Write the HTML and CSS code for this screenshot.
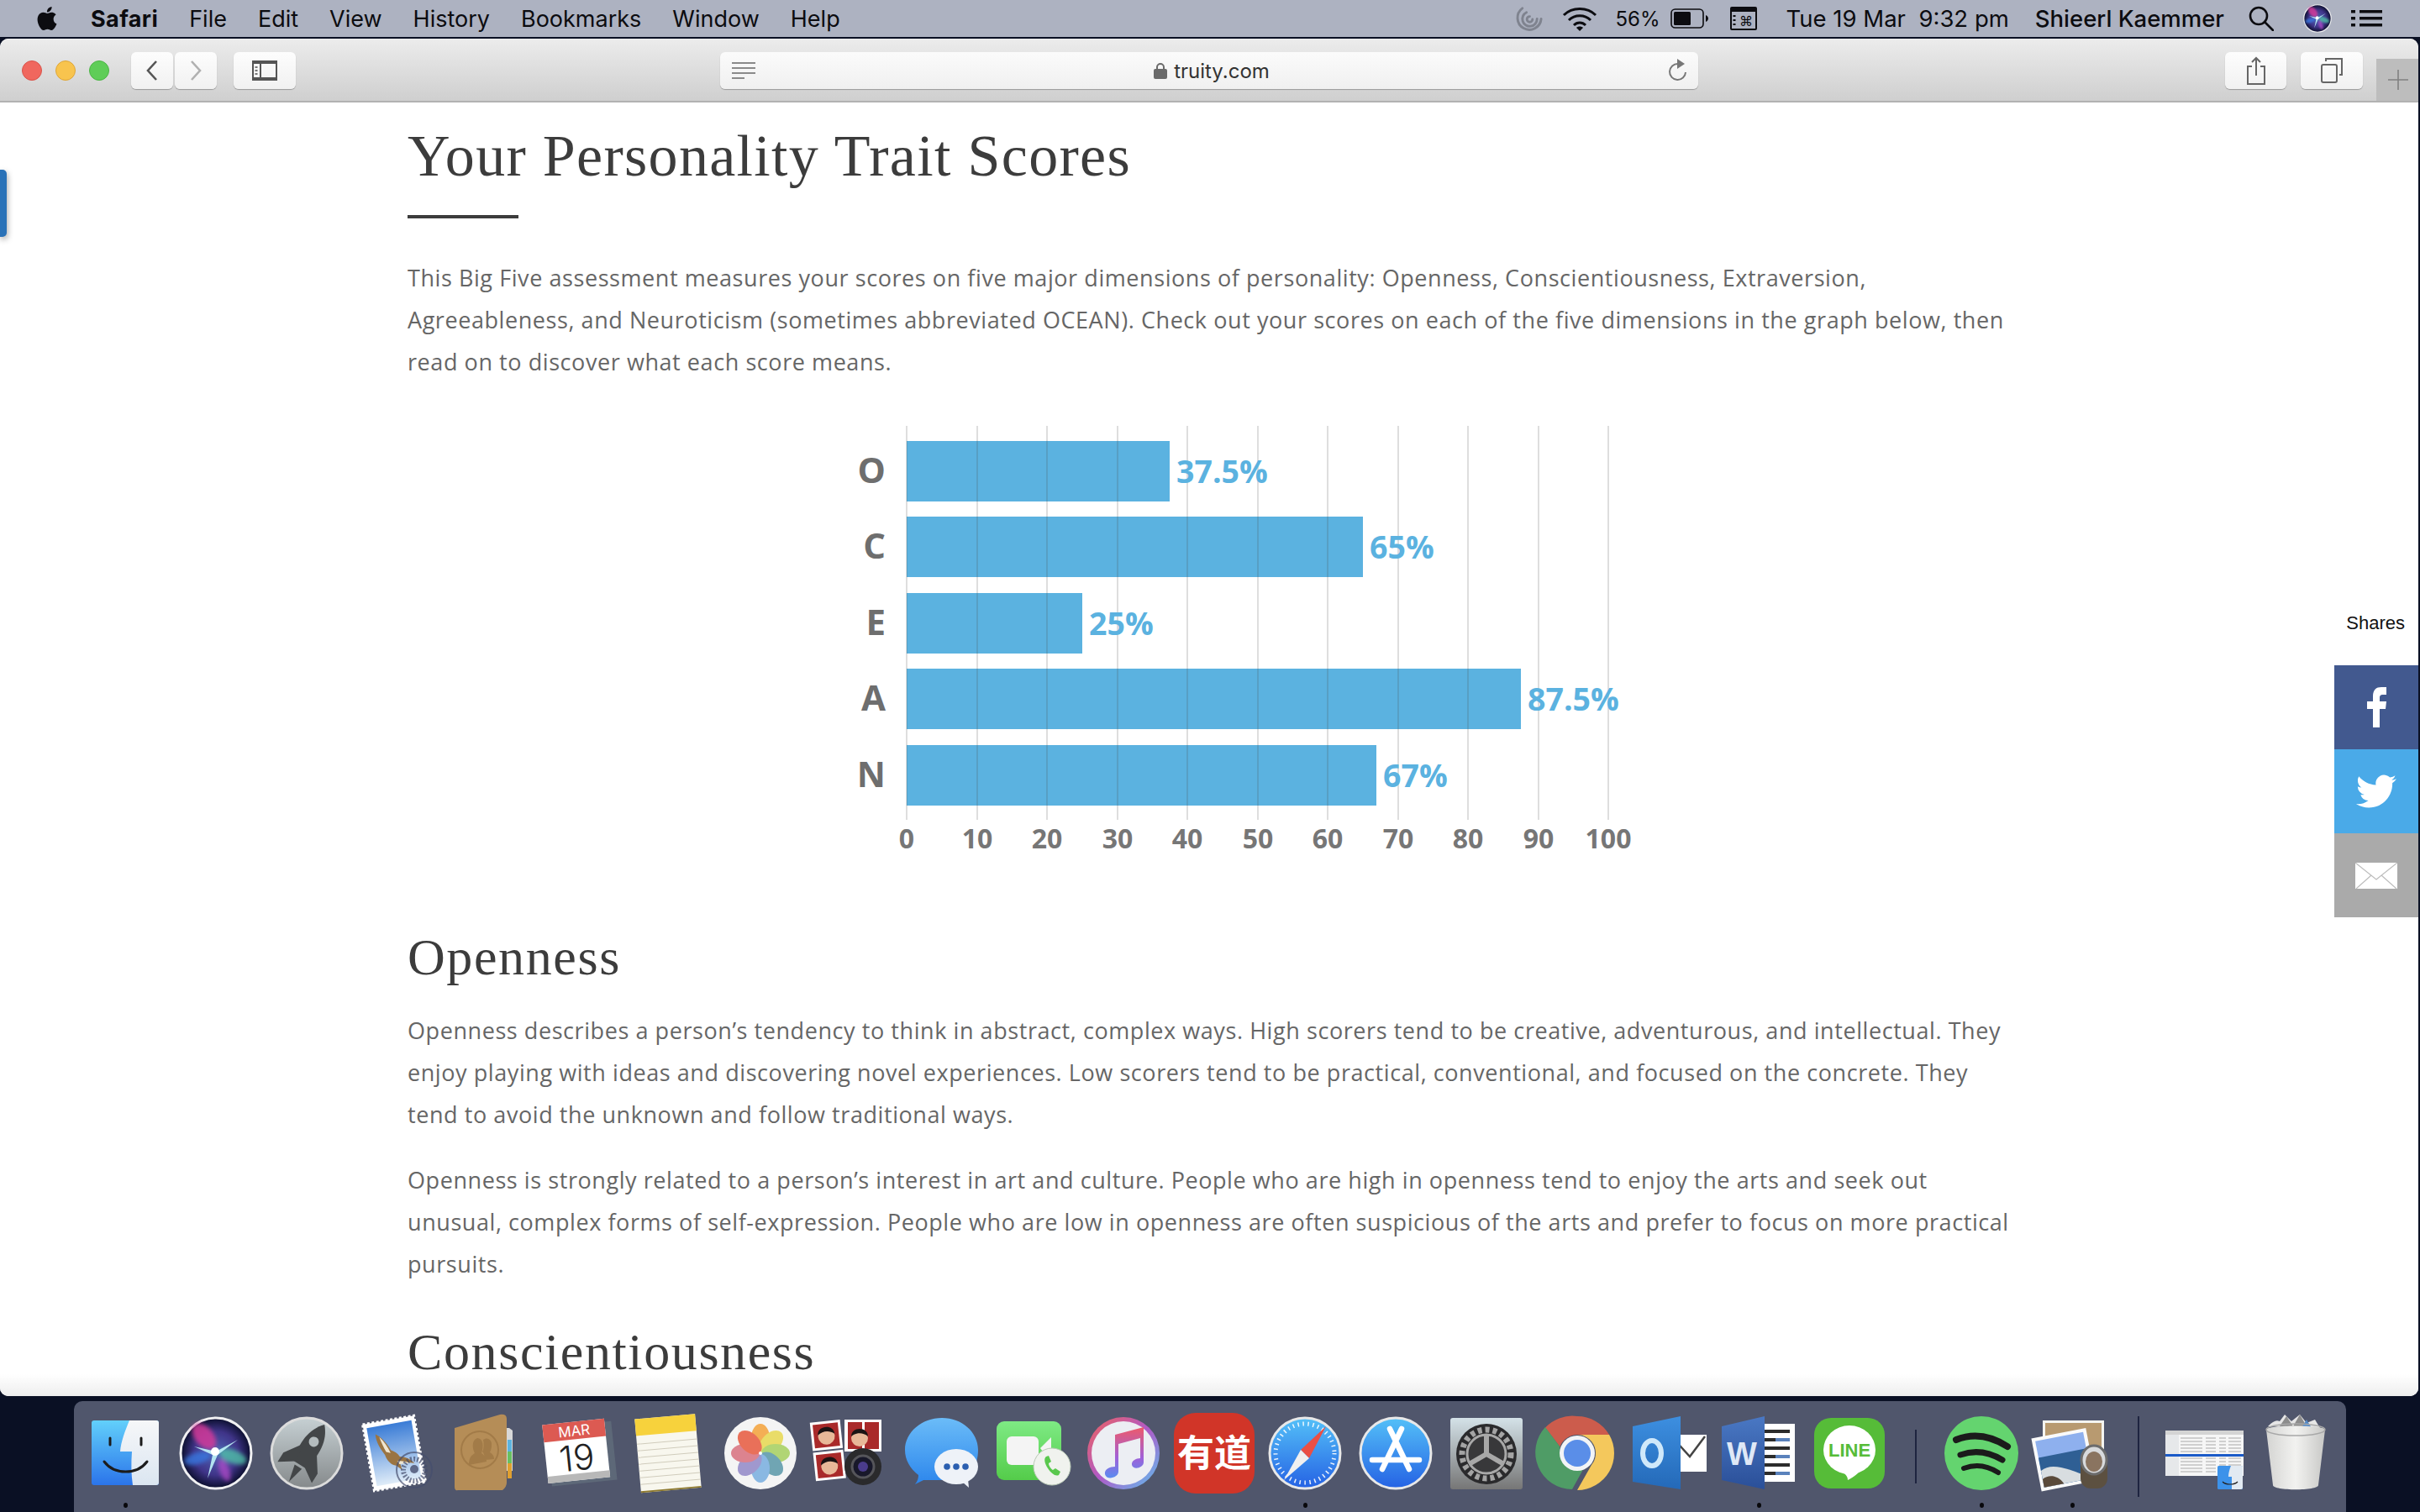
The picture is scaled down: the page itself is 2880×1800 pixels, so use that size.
FILE: index.html
```html
<!DOCTYPE html>
<html lang="en">
<head>
<meta charset="utf-8">
<title>Your Personality Trait Scores</title>
<link rel="stylesheet" href="styles.css">
</head>
<body>
<svg class="defs" aria-hidden="true">
  <defs>
    <filter id="fBlur" x="-30%" y="-30%" width="160%" height="160%"><feGaussianBlur stdDeviation="2.5"/></filter>
    <linearGradient id="gFinder" x1="0" y1="0" x2="0" y2="1"><stop offset="0" stop-color="#62d0fb"/><stop offset="1" stop-color="#2b74ea"/></linearGradient>
    <linearGradient id="gFinderR" x1="0" y1="0" x2="0" y2="1"><stop offset="0" stop-color="#f6f7f9"/><stop offset="1" stop-color="#dbe6f1"/></linearGradient>
    <radialGradient id="gSiri"><stop offset="0" stop-color="#4f66b8"/><stop offset=".62" stop-color="#3f3488"/><stop offset="1" stop-color="#0a0e2c"/></radialGradient>
    <linearGradient id="gLaunch" x1="0" y1="0" x2="0" y2="1"><stop offset="0" stop-color="#c6d0d3"/><stop offset="1" stop-color="#85898b"/></linearGradient>
    <linearGradient id="gMail" x1="0" y1="0" x2="0" y2="1"><stop offset="0" stop-color="#3a7cd6"/><stop offset="1" stop-color="#dfecf8"/></linearGradient>
    <linearGradient id="gMsg" x1="0" y1="0" x2="0" y2="1"><stop offset="0" stop-color="#6bbcf8"/><stop offset="1" stop-color="#2c86ec"/></linearGradient>
    <linearGradient id="gFace" x1="0" y1="0" x2="0" y2="1"><stop offset="0" stop-color="#7eea84"/><stop offset="1" stop-color="#54cc4a"/></linearGradient>
    <linearGradient id="gTunesR" x1="0" y1="0" x2="1" y2="1"><stop offset="0" stop-color="#f0625a"/><stop offset=".5" stop-color="#b05ac8"/><stop offset="1" stop-color="#5ac4f0"/></linearGradient>
    <linearGradient id="gNote" x1="0" y1="0" x2="0" y2="1"><stop offset="0" stop-color="#ee5a6a"/><stop offset=".6" stop-color="#a060d8"/><stop offset="1" stop-color="#5a8cf0"/></linearGradient>
    <linearGradient id="gBlue" x1="0" y1="0" x2="0" y2="1"><stop offset="0" stop-color="#54c0f8"/><stop offset="1" stop-color="#2562e4"/></linearGradient>
    <linearGradient id="gPrefs" x1="0" y1="0" x2="0" y2="1"><stop offset="0" stop-color="#d4e2e8"/><stop offset="1" stop-color="#767676"/></linearGradient>
    <linearGradient id="gTrash" x1="0" y1="0" x2="1" y2="0"><stop offset="0" stop-color="#d4d4d2"/><stop offset=".5" stop-color="#f2f2f0"/><stop offset="1" stop-color="#c8c8c6"/></linearGradient>
    <linearGradient id="gWord" x1="0" y1="0" x2="0" y2="1"><stop offset="0" stop-color="#4a78c4"/><stop offset="1" stop-color="#2a4f98"/></linearGradient>
    <linearGradient id="gOutlook" x1="0" y1="0" x2="0" y2="1"><stop offset="0" stop-color="#3d8fe0"/><stop offset="1" stop-color="#2469b8"/></linearGradient>
    <symbol id="siri" viewBox="0 0 104 104">
      <circle cx="52" cy="52" r="42" fill="url(#gSiri)" stroke="#f0f0f2" stroke-width="3"/>
      <g filter="url(#fBlur)">
        <ellipse cx="38" cy="32" rx="18" ry="11" fill="#d43a9a" opacity=".85" transform="rotate(50 38 32)"/>
        <ellipse cx="72" cy="56" rx="17" ry="8" fill="#4fc8a8" opacity=".75" transform="rotate(20 72 56)"/>
        <ellipse cx="62" cy="72" rx="14" ry="6" fill="#b04ac8" opacity=".75" transform="rotate(70 62 72)"/>
        <ellipse cx="30" cy="58" rx="16" ry="7" fill="#3a78e0" opacity=".8" transform="rotate(-15 30 58)"/>
      </g>
      <path d="M52 50 L78 36 L54 54 L42 82 L48 54 L26 44z" fill="#bff4fa" opacity=".9"/>
      <circle cx="51" cy="50" r="5" fill="#fff"/>
    </symbol>
  </defs>
</svg>

<header class="menubar">
  <nav class="menu-left">
    <svg class="apple" viewBox="0 0 24 24"><path d="M12.152 6.896c-.948 0-2.415-1.078-3.96-1.04-2.04.027-3.91 1.183-4.961 3.014-2.117 3.675-.546 9.103 1.519 12.09 1.013 1.454 2.208 3.09 3.792 3.039 1.52-.065 2.09-.987 3.935-.987 1.831 0 2.35.987 3.96.948 1.637-.026 2.676-1.48 3.676-2.948 1.156-1.688 1.636-3.325 1.662-3.415-.039-.013-3.182-1.221-3.22-4.857-.026-3.04 2.48-4.494 2.597-4.559-1.429-2.09-3.623-2.324-4.39-2.376-2-.156-3.675 1.09-4.61 1.09zM15.53 3.83c.843-1.012 1.4-2.427 1.245-3.83-1.207.052-2.662.805-3.532 1.818-.78.896-1.454 2.338-1.273 3.714 1.338.104 2.715-.688 3.559-1.701"/></svg>
    <span class="menu-app">Safari</span>
    <span>File</span><span>Edit</span><span>View</span><span>History</span><span>Bookmarks</span><span>Window</span><span>Help</span>
  </nav>
  <div class="menu-right">
    <svg class="st-spiral" viewBox="0 0 34 34" fill="none" stroke="#7f838f" stroke-width="3" stroke-linecap="round"><path d="M8 4A14.5 14.5 0 1 0 31 17"/><path d="M13 9A9 9 0 1 0 26 17"/><path d="M17 14a3.4 3.4 0 1 0 3.4 3.4"/></svg>
    <svg class="st-wifi" viewBox="0 0 42 30" fill="none" stroke="#0c0c10" stroke-width="3"><path d="M2 11C12 1 30 1 40 11"/><path d="M8 17C15 10 27 10 34 17"/><path d="M14 23C18 19 24 19 28 23"/><path d="M21 30l-4-4c2-2 6-2 8 0z" fill="#0c0c10" stroke="none"/></svg>
    <span class="st-pct">56%</span>
    <svg class="st-batt" viewBox="0 0 45 24"><rect x="1" y="1" width="38" height="22" rx="4.5" fill="none" stroke="#0c0c10" stroke-width="1.6"/><rect x="4" y="4" width="20" height="16" rx="1.5" fill="#0c0c10"/><path d="M42 8c2 1 3 2.500 3 4s-1 3-3 4z" fill="#0c0c10"/></svg>
    <svg class="st-cmd" viewBox="0 0 32 28"><rect x="1" y="1" width="30" height="26" rx="1" fill="none" stroke="#0c0c10" stroke-width="2"/><rect x="1" y="1" width="30" height="5" fill="#0c0c10"/><text x="19" y="23" class="st-cmd-glyph">⌘</text><path d="M5 10v14" stroke="#0c0c10" stroke-width="3" stroke-dasharray="2 3"/></svg>
    <span class="st-date">Tue 19 Mar&nbsp; 9:32 pm</span>
    <span class="st-name">Shieerl Kaemmer</span>
    <svg class="st-search" viewBox="0 0 30 30" fill="none" stroke="#0c0c10" stroke-width="2.6"><circle cx="12" cy="12" r="10"/><path d="M19 19l10 10" stroke-linecap="round"/></svg>
    <svg class="st-siri" viewBox="8 8 88 88"><use href="#siri" width="104" height="104"/></svg>
    <svg class="st-list" viewBox="0 0 37 20"><g fill="#0c0c10"><rect width="5" height="3.500"/><rect y="8" width="5" height="3.500"/><rect y="16" width="5" height="3.500"/><rect x="10" width="27" height="3.500"/><rect x="10" y="8" width="27" height="3.500"/><rect x="10" y="16" width="27" height="3.500"/></g></svg>
  </div>
</header>

<main class="window">
  <div class="toolbar">
    <div class="lights"><i class="light red"></i><i class="light yellow"></i><i class="light green"></i></div>
    <div class="btn btn-back"><svg class="ico-chev" viewBox="0 0 16 26" fill="none" stroke="#555" stroke-width="2.6"><path d="M13 2L3 13l10 11"/></svg></div>
    <div class="btn btn-fwd"><svg class="ico-chev" viewBox="0 0 16 26" fill="none" stroke="#b0b0b0" stroke-width="2.6"><path d="M3 2l10 11L3 24"/></svg></div>
    <div class="btn btn-side"><svg class="ico-side" viewBox="0 0 30 24"><rect x="1" y="1" width="28" height="22" fill="none" stroke="#555" stroke-width="2"/><rect x="1" y="1" width="28" height="3" fill="#555"/><rect x="1" y="20" width="28" height="3" fill="#555"/><path d="M10 1v22" stroke="#555" stroke-width="2"/><path d="M5 7v10" stroke="#777" stroke-width="3" stroke-dasharray="2 2"/></svg></div>
    <div class="address">
      <svg class="ico-reader" viewBox="0 0 28 20"><path d="M0 1h28M0 7h28M0 13h28M0 19h15" stroke="#8a8a8a" stroke-width="2"/></svg>
      <div class="url"><svg class="ico-lock" viewBox="0 0 16 20"><rect y="8" width="16" height="12" rx="2" fill="#6a6a6a"/><path d="M4 9V6a4 4 0 0 1 8 0v3" fill="none" stroke="#6a6a6a" stroke-width="2"/></svg><span>truity.com</span></div>
      <svg class="ico-reload" viewBox="0 0 22 28" fill="none" stroke="#777" stroke-width="2"><path d="M12 6a9.500 9.500 0 1 0 9 10"/><path d="M11 0l9 6-9 6z" fill="#777" stroke="none"/></svg>
    </div>
    <div class="btn btn-share"><svg class="ico-share" viewBox="0 0 22 34" fill="none" stroke="#666" stroke-width="2"><path d="M6 12H1v21h20V12h-5"/><path d="M11 23V2M6 7l5-5 5 5"/></svg></div>
    <div class="btn btn-tabs"><svg class="ico-tabs" viewBox="0 0 26 30" fill="none" stroke="#666" stroke-width="2"><rect x="1" y="8" width="18" height="21" rx="2"/><path d="M6 4V1h19v19h-3"/></svg></div>
    <div class="newtab"><svg class="ico-plus" viewBox="0 0 24 24"><path d="M12 0v24M0 12h24" stroke="#808080" stroke-width="1.600"/></svg></div>
  </div>

  <div class="page">
    <article class="content">
      <h1 class="h1">Your Personality Trait Scores</h1>
      <div class="rule"></div>
      <p class="para para-intro">This Big Five assessment measures your scores on five major dimensions of personality: Openness, Conscientiousness, Extraversion,<br>Agreeableness, and Neuroticism (sometimes abbreviated OCEAN). Check out your scores on each of the five dimensions in the graph below, then<br>read on to discover what each score means.</p>

      <svg class="chart" viewBox="0 0 960 520">
        <g class="bars">
          <rect x="79" y="25" width="313" height="72"/>
          <rect x="79" y="115" width="543" height="72"/>
          <rect x="79" y="206" width="209" height="72"/>
          <rect x="79" y="296" width="731" height="72"/>
          <rect x="79" y="387" width="559" height="72"/>
        </g>
        <g class="grid">
          <path d="M79 7v469M163 7v469M246 7v469M330 7v469M413 7v469M497 7v469M580 7v469M664 7v469M747 7v469M831 7v469M914 7v469"/>
        </g>
        <g class="cat">
          <text x="54" y="75">O</text><text x="54" y="165">C</text><text x="54" y="256">E</text><text x="54" y="346">A</text><text x="54" y="437">N</text>
        </g>
        <g class="pct">
          <text x="400" y="75">37.5%</text><text x="630" y="165">65%</text><text x="296" y="256">25%</text><text x="818" y="346">87.5%</text><text x="646" y="437">67%</text>
        </g>
        <g class="axis">
          <text x="79" y="510">0</text><text x="163" y="510">10</text><text x="246" y="510">20</text><text x="330" y="510">30</text><text x="413" y="510">40</text><text x="497" y="510">50</text><text x="580" y="510">60</text><text x="664" y="510">70</text><text x="747" y="510">80</text><text x="831" y="510">90</text><text x="914" y="510">100</text>
        </g>
      </svg>

      <h2 class="h2 h2-first">Openness</h2>
      <p class="para para-a">Openness describes a person’s tendency to think in abstract, complex ways. High scorers tend to be creative, adventurous, and intellectual. They<br>enjoy playing with ideas and discovering novel experiences. Low scorers tend to be practical, conventional, and focused on the concrete. They<br>tend to avoid the unknown and follow traditional ways.</p>
      <p class="para para-b">Openness is strongly related to a person’s interest in art and culture. People who are high in openness tend to enjoy the arts and seek out<br>unusual, complex forms of self-expression. People who are low in openness are often suspicious of the arts and prefer to focus on more practical<br>pursuits.</p>
      <h2 class="h2 h2-next">Conscientiousness</h2>
    </article>

    <div class="side-tab"></div>

    <aside class="share">
      <div class="share-label">Shares</div>
      <div class="share-btn fb"><svg class="ico-fb" viewBox="0 0 23 48"><path d="M7 48V26H0v-9h7v-6C7 3 11 0 17 0h6v9h-4c-3 0-4 1-4 4v4h8l-1 9h-7v22z" fill="#fff"/></svg></div>
      <div class="share-btn tw"><svg class="ico-tw" viewBox="0 0 24 20"><path transform="translate(0 -2)" d="M23.953 4.57a10 10 0 01-2.825.775 4.958 4.958 0 002.163-2.723c-.951.555-2.005.959-3.127 1.184a4.92 4.92 0 00-8.384 4.482C7.69 8.095 4.067 6.13 1.64 3.162a4.822 4.822 0 00-.666 2.475c0 1.71.87 3.213 2.188 4.096a4.904 4.904 0 01-2.228-.616v.06a4.923 4.923 0 003.946 4.827 4.996 4.996 0 01-2.212.085 4.936 4.936 0 004.604 3.417 9.867 9.867 0 01-6.102 2.105c-.39 0-.779-.023-1.17-.067a13.995 13.995 0 007.557 2.209c9.053 0 13.998-7.496 13.998-13.985 0-.21 0-.42-.015-.63A9.935 9.935 0 0024 4.59z" fill="#fff"/></svg></div>
      <div class="share-btn em"><svg class="ico-em" viewBox="0 0 50 31"><rect width="50" height="31" fill="#fff"/><path d="M0 0l25 20L50 0M1 31l18-16M49 31L31 15" fill="none" stroke="#bcbcbc" stroke-width="1.200"/></svg></div>
    </aside>
    <div class="page-fade"></div>
  </div>
</main>

<footer class="dock">
  <div class="dk"><svg viewBox="0 0 104 104"><rect x="12" y="13" width="80" height="77" rx="3" fill="url(#gFinder)"/><path d="M57 13C52 25 47 38 46 50H60C59 64 59 77 61 90H89q3 0 3-3V16q0-3-3-3z" fill="url(#gFinderR)"/><path d="M34 34v8M71 34v8" stroke="#1c1c1c" stroke-width="3" stroke-linecap="round"/><path d="M27 62c12 16 39 16 51 0" fill="none" stroke="#1c1c1c" stroke-width="3" stroke-linecap="round"/></svg><i class="dot on"></i></div>

  <div class="dk"><svg viewBox="0 0 104 104"><use href="#siri" width="104" height="104"/></svg><i class="dot"></i></div>

  <div class="dk"><svg viewBox="0 0 104 104"><circle cx="52" cy="52" r="42" fill="url(#gLaunch)" stroke="#dcdcdc" stroke-width="3"/><g transform="rotate(32 52 52)" fill="#434648"><path d="M52 12C65 26 67 46 60 68H44C37 46 39 26 52 12z"/><path d="M43 44L28 66v13l18-12zM61 44l15 22v13L58 67z"/><path d="M47 71h10l-5 21z"/><circle cx="52" cy="36" r="6" fill="#b4bcbe"/></g></svg><i class="dot"></i></div>

  <div class="dk"><svg viewBox="0 0 104 104"><g transform="rotate(-10 48 52)"><rect x="17" y="12" width="62" height="80" fill="#fff" stroke="#fff" stroke-width="3" stroke-dasharray="3 2.500"/><rect x="21" y="17" width="54" height="70" fill="url(#gMail)"/><path d="M30 26c8 6 12 14 15 22 4 2 7 5 9 9 6 1 12 5 16 11-7-2-12-3-17-3l1 8-6-6c-6-2-10-8-11-15-4-8-8-16-7-26z" fill="#9a7442"/><path d="M34 30c5 6 8 14 10 21l-5-2c-2-6-4-12-5-19zM50 62c5 0 10 2 15 5l-13-1z" fill="#efe6d2"/></g><g fill="none" stroke="#464e6e" opacity=".7"><circle cx="72" cy="72" r="21" stroke-width="2"/><circle cx="72" cy="72" r="13" stroke-width="6" stroke-dasharray="2 2"/></g><circle cx="72" cy="71" r="5" fill="#464e6e" opacity=".8"/></svg><i class="dot"></i></div>

  <div class="dk"><svg viewBox="0 0 104 104"><path d="M70 22h7l4 3v48h-7z" fill="#d8d8d8"/><path d="M75 36h5v14h-5z" fill="#5cb4e0"/><path d="M75 50h5v14h-5z" fill="#68c060"/><path d="M75 64h5v18h-5z" fill="#e0a030"/><path d="M12 22L66 6q8-1 8 5v76q0 5-5 9L16 96q-4 1-4-4z" fill="#b58d57"/><circle cx="42" cy="48" r="22" fill="none" stroke="#a27b48" stroke-width="2"/><path d="M29 66c0-10 4-12 7-14-3-5-4-16 3-18 7 0 8 10 5 18 3 2 6 5 6 10zM48 60c0-4-1-8-3-10 2-2 2-10 1-14 5-4 11 0 10 7 0 3-1 6-2 8 3 2 5 4 5 8z" fill="#a27b48"/></svg><i class="dot"></i></div>

  <div class="dk"><svg viewBox="0 0 104 104"><g transform="rotate(-6 52 52)"><rect x="16" y="18" width="78" height="70" fill="#5d6878"/><rect x="12" y="14" width="74" height="70" fill="#fff"/><rect x="12" y="14" width="74" height="21" fill="#dc5a52"/><rect x="12" y="76" width="74" height="8" fill="#b8b8b8"/><text x="49" y="31" class="cal-mon">MAR</text><text x="49" y="72" class="cal-day">19</text></g></svg><i class="dot"></i></div>

  <div class="dk"><svg viewBox="0 0 104 104"><g transform="rotate(-5 52 52)"><rect x="14" y="8" width="72" height="88" fill="#f8f7ee"/><rect x="14" y="8" width="72" height="20" fill="#f7d23c"/><path d="M14 38h72M14 46h72M14 54h72M14 62h72M14 70h72M14 78h72M14 86h72" stroke="#d0ccbc" stroke-width="1"/><rect x="14" y="94" width="72" height="2" fill="#8e7a30"/></g></svg><i class="dot"></i></div>

  <div class="dk"><svg viewBox="0 0 104 104"><circle cx="52" cy="52" r="43" fill="#f4f4f4"/><g opacity=".85"><ellipse cx="52" cy="34" rx="11" ry="17" fill="#f4a23a"/><ellipse cx="52" cy="34" rx="11" ry="17" fill="#e8d850" transform="rotate(45 52 52)"/><ellipse cx="52" cy="34" rx="11" ry="17" fill="#a6d05e" transform="rotate(90 52 52)"/><ellipse cx="52" cy="34" rx="11" ry="17" fill="#5a98a8" transform="rotate(135 52 52)"/><ellipse cx="52" cy="34" rx="11" ry="17" fill="#78aee0" transform="rotate(180 52 52)"/><ellipse cx="52" cy="34" rx="11" ry="17" fill="#9288c8" transform="rotate(225 52 52)"/><ellipse cx="52" cy="34" rx="11" ry="17" fill="#d8707e" transform="rotate(270 52 52)"/><ellipse cx="52" cy="34" rx="11" ry="17" fill="#e85a3e" transform="rotate(315 52 52)"/></g><circle cx="52" cy="52" r="2" fill="#fff"/></svg><i class="dot"></i></div>

  <div class="dk"><svg viewBox="0 0 104 104"><g transform="rotate(-6 40 45)"><rect x="6" y="12" width="36" height="34" fill="#fff"/><rect x="9" y="15" width="30" height="28" fill="#a92a2a"/><circle cx="24" cy="30" r="10" fill="#e8b898"/><path d="M14 28c0-12 20-12 20 0-6-5-14-5-20 0z" fill="#1c1414"/><rect x="6" y="48" width="36" height="34" fill="#fff"/><rect x="9" y="51" width="30" height="28" fill="#a92a2a"/><circle cx="24" cy="66" r="10" fill="#e8b898"/><path d="M14 64c0-12 20-12 20 0-6-5-14-5-20 0z" fill="#1c1414"/></g><rect x="44" y="12" width="44" height="38" fill="#fff"/><rect x="48" y="15" width="17" height="32" fill="#a92a2a"/><rect x="68" y="15" width="17" height="32" fill="#a92a2a"/><circle cx="62" cy="34" r="10" fill="#e8b898"/><path d="M52 32c0-12 20-12 20 0-6-5-14-5-20 0z" fill="#1c1414"/><circle cx="66" cy="68" r="22" fill="#2a2a2c"/><circle cx="66" cy="68" r="13" fill="#18182a" stroke="#55555a" stroke-width="3"/><circle cx="66" cy="68" r="6" fill="#4a3c8c"/></svg><i class="dot"></i></div>

  <div class="dk"><svg viewBox="0 0 104 104"><path d="M52 10c24 0 43 17 43 38 0 20-10 32-26 36H30l-10 5c3-4 4-7 4-11C14 70 8 60 8 48c0-21 20-38 44-38z" fill="url(#gMsg)"/><ellipse cx="69" cy="68" rx="26" ry="21" fill="#eef2f8"/><path d="M76 86l8 7-1-10z" fill="#eef2f8"/><g fill="#2b5fb0"><circle cx="58" cy="68" r="3.800"/><circle cx="69" cy="68" r="3.800"/><circle cx="80" cy="68" r="3.800"/></g></svg><i class="dot"></i></div>

  <div class="dk"><svg viewBox="0 0 104 104"><rect x="9" y="14" width="77" height="70" rx="9" fill="url(#gFace)"/><rect x="21" y="32" width="38" height="34" rx="6" fill="#f4f4f4"/><path d="M61 46l13-13v30z" fill="#f4f4f4"/><circle cx="75" cy="68" r="22" fill="#f0f2ee" stroke="#b8c8b4" stroke-width="1"/><path d="M68 56c-3 2-2 8 2 14s9 10 13 8l2-4-6-4-3 2c-2-1-5-5-5-8l3-2-3-7z" fill="#5ac84e"/></svg><i class="dot"></i></div>

  <div class="dk"><svg viewBox="0 0 104 104"><circle cx="52" cy="52" r="43" fill="url(#gTunesR)"/><circle cx="52" cy="52" r="38" fill="#eceef3"/><path d="M42 30l34-9v42c0 6-12 10-14 3-1-5 5-8 10-8V34l-26 7v33c0 7-14 11-16 3-1-6 6-9 12-9z" fill="url(#gNote)"/></svg><i class="dot"></i></div>

  <div class="dk"><svg viewBox="0 0 104 104"><rect x="4" y="4" width="96" height="96" rx="26" fill="#d13528"/><text x="52" y="68" class="youdao">有道</text></svg><i class="dot"></i></div>

  <div class="dk"><svg viewBox="0 0 104 104"><circle cx="52" cy="52" r="42" fill="url(#gBlue)" stroke="#e8e8e8" stroke-width="3"/><circle cx="52" cy="52" r="35" fill="none" stroke="#fff" stroke-width="5" stroke-dasharray="1.500 4.500" opacity=".9"/><path d="M77 20L47 48l10 10z" fill="#ea4f45"/><path d="M27 84l20-36 10 10z" fill="#f0f0f0"/></svg><i class="dot on"></i></div>

  <div class="dk"><svg viewBox="0 0 104 104"><circle cx="52" cy="52" r="42" fill="url(#gBlue)" stroke="#e8e8e8" stroke-width="3"/><g fill="none" stroke="#fff" stroke-width="6.500" stroke-linecap="round"><path d="M45 23l23 48M59 23L36 71"/><path d="M24 60h56"/></g></svg><i class="dot"></i></div>

  <div class="dk"><svg viewBox="0 0 104 104"><rect x="9" y="10" width="86" height="85" rx="3" fill="url(#gPrefs)"/><circle cx="52" cy="53" r="36" fill="#2a2a2c"/><circle cx="52" cy="53" r="29" fill="none" stroke="#a4a4a4" stroke-width="7" stroke-dasharray="5 4"/><circle cx="52" cy="53" r="23" fill="#38383a" stroke="#a8a8a8" stroke-width="3"/><path d="M52 53V31M52 53L33 64M52 53l19 11" stroke="#a8a8a8" stroke-width="6"/></svg><i class="dot"></i></div>

  <div class="dk"><svg viewBox="0 0 104 104"><path d="M52 8a44 44 0 0 1 38.100 22H52a22 22 0 0 0-20.600 14.300L14 21.500A44 44 0 0 1 52 8z" fill="#cc5c4c"/><path d="M14 21a44 44 0 0 0 32 74l16-29a22 22 0 0 1-30.600-21.700z" fill="#4f9c66"/><path d="M90.100 30H52a22 22 0 0 1 17 36L52 96a44 44 0 0 0 38.100-66z" fill="#f4c85c"/><circle cx="52" cy="52" r="21" fill="#f2f4f6"/><circle cx="52" cy="52" r="16" fill="#5a8ee8"/></svg><i class="dot"></i></div>

  <div class="dk"><svg viewBox="0 0 104 104"><rect x="58" y="30" width="40" height="44" fill="#fff"/><path d="M58 34l20 22 18-24" fill="none" stroke="#444" stroke-width="2.500"/><path d="M10 20L67 8v87L10 86z" fill="url(#gOutlook)"/><ellipse cx="33" cy="52" rx="11" ry="15" fill="none" stroke="#cfe8fa" stroke-width="6"/></svg><i class="dot"></i></div>

  <div class="dk"><svg viewBox="0 0 104 104"><rect x="59" y="17" width="36" height="69" fill="#fff"/><path d="M59 26h30M59 36h30M59 46h30M59 56h30M59 66h30M59 76h30" stroke="#2c2c2c" stroke-width="4"/><path d="M72 36h17M72 56h17M72 76h17" stroke="#5a82bc" stroke-width="4"/><path d="M8 20L59 8v87L8 84z" fill="url(#gWord)"/><text x="32" y="66" class="word">W</text></svg><i class="dot on"></i></div>

  <div class="dk"><svg viewBox="0 0 104 104"><rect x="10" y="10" width="84" height="84" rx="20" fill="#56bc38"/><ellipse cx="52" cy="48" rx="31" ry="29" fill="#fff"/><path d="M44 74c4 4 6 6 6 10 8-4 12-8 16-12z" fill="#fff"/><text x="52" y="56" class="line">LINE</text></svg><i class="dot"></i></div>

  <div class="dk-sep sep-short"></div>

  <div class="dk"><svg viewBox="0 0 104 104"><circle cx="52" cy="52" r="44" fill="#64d46f"/><g fill="none" stroke="#1b1b1b" stroke-linecap="round"><path d="M22 36Q52 24 83 44" stroke-width="8"/><path d="M27 54Q52 45 77 60" stroke-width="7"/><path d="M31 70Q52 62 72 75" stroke-width="6"/></g></svg><i class="dot on"></i></div>

  <div class="dk"><svg viewBox="0 0 104 104"><rect x="17" y="13" width="73" height="60" fill="#f4f4f0"/><rect x="20" y="16" width="67" height="54" fill="#b89a70"/><g transform="rotate(-11 40 55)"><rect x="8" y="28" width="66" height="64" fill="#fafafa"/><rect x="12" y="32" width="58" height="56" fill="#8eb0ee"/><rect x="12" y="52" width="58" height="36" fill="#2f5f94"/><path d="M12 68c14-8 30 2 58 20H12z" fill="#d8dde0"/><path d="M12 78c8-4 18-2 24 10H12z" fill="#5a4a3a"/></g><rect x="62" y="48" width="32" height="46" rx="12" fill="#5c5040"/><ellipse cx="78" cy="60" rx="15" ry="17" fill="#d8dadc" stroke="#6c6c6c" stroke-width="3"/><ellipse cx="78" cy="62" rx="10" ry="12" fill="#8a7460"/></svg><i class="dot on"></i></div>

  <div class="dk-sep sep-tall"></div>

  <div class="dk"><svg viewBox="0 0 104 104"><rect x="6" y="25" width="93" height="54" fill="#f6f6f6"/><rect x="6" y="25" width="93" height="5" fill="#d4d4d4"/><rect x="6" y="30" width="16" height="49" fill="#e6e8ea"/><path d="M24 34h72M24 38h72M24 42h72M24 46h72M24 50h72M24 58h72M24 62h72M24 66h72M24 70h72M24 74h72" stroke="#a8a8a8" stroke-width="1.200" stroke-dasharray="26 4 12 4 8 3"/><rect x="6" y="53" width="93" height="3" fill="#1a5ac8"/><rect x="68" y="67" width="30" height="28" rx="1.500" fill="#3c92ea"/><path d="M84 67c-2 5-3 9-3 13h4v15h11q2 0 2-2V68q0-1-2-1z" fill="#e2eaf2"/><path d="M74 86c4 4 14 4 18 0" fill="none" stroke="#222" stroke-width="1.200"/></svg><i class="dot"></i></div>

  <div class="dk"><svg viewBox="0 0 104 104"><path d="M20 20c6-6 10-8 14-6l6-8 8 8 10-8 8 10 10-4 6 10z" fill="#e6e6e6"/><path d="M42 8l8 12H34zM58 6l8 14H50z" fill="#8c8c8c"/><path d="M66 12l6 10H60z" fill="#4f88c8"/><path d="M18 24c0-6 70-6 70 0l-8 66c0 7-54 7-54 0z" fill="url(#gTrash)"/><ellipse cx="53" cy="24" rx="35" ry="7" fill="none" stroke="#a8a8a8" stroke-width="1.500"/></svg><i class="dot"></i></div>
</footer>
</body>
</html>
```

FILE: styles.css
```css
* { box-sizing: border-box; }
html, body { margin: 0; padding: 0; }
body {
  width: 2880px;
  height: 1800px;
  overflow: hidden;
  background: #0a1024;
  font-family: "Liberation Sans", Arial, sans-serif;
}
.defs { display: block; width: 0; height: 0; }

/* Menu bar */
.menubar {
  height: 44px;
  background: #adb2c1;
  display: flex;
  align-items: center;
  justify-content: space-between;
  padding: 0 45px 0 42px;
  color: #0c0c10;
  font-family: Inter, "Liberation Sans", sans-serif;
  font-size: 27px;
}
.menu-left { display: flex; align-items: center; gap: 37px; }
.apple { width: 28px; height: 34px; fill: #0c0c10; margin-right: 1px; }
.menu-app { font-weight: 700; letter-spacing: .4px; }
.menu-right { display: flex; align-items: center; }
.st-spiral { width: 33px; height: 33px; }
.st-wifi { width: 42px; height: 30px; margin-left: 22px; }
.st-pct { margin-left: 22px; font-size: 24px; }
.st-batt { width: 45px; height: 24px; margin-left: 12px; }
.st-cmd { width: 32px; height: 28px; margin-left: 26px; }
.st-cmd-glyph { font-family: "DejaVu Sans", sans-serif; font-size: 16px; text-anchor: middle; fill: #0c0c10; }
.st-date { margin-left: 35px; white-space: pre; font-size: 27.5px; }
.st-name { margin-left: 31px; font-weight: 500; font-size: 27.5px; }
.st-search { width: 30px; height: 30px; margin-left: 29px; }
.st-siri { width: 34px; height: 34px; margin-left: 35px; }
.st-list { width: 37px; height: 20px; margin-left: 23px; }

/* Window */
.window {
  margin-top: 2px;
  width: 2878px;
  height: 1616px;
  border-radius: 10px;
  overflow: hidden;
  background: #fff;
  display: flex;
  flex-direction: column;
}
.toolbar {
  height: 76px;
  flex: none;
  display: flex;
  align-items: center;
  padding: 2px 0 0 26px;
  background: linear-gradient(#ececec, #cfcfcf);
  border-bottom: 2px solid #b2b2b2;
}
.lights { display: flex; gap: 16px; }
.light { display: block; width: 24px; height: 24px; border-radius: 50%; }
.red { background: #f0675e; border: 1px solid #d9534a; }
.yellow { background: #f8c44e; border: 1px solid #dea638; }
.green { background: #5fcd58; border: 1px solid #4bb545; }
.btn {
  height: 44px;
  background: linear-gradient(#fdfdfd, #f1f1f1);
  border-radius: 6px;
  box-shadow: 0 1px 1px rgba(0, 0, 0, .28);
  display: flex;
  align-items: center;
  justify-content: center;
  flex: none;
}
.btn-back { width: 50px; margin-left: 26px; }
.btn-fwd { width: 50px; margin-left: 2px; }
.btn-side { width: 74px; margin-left: 20px; }
.btn-share { width: 73px; margin-left: 627px; }
.btn-tabs { width: 74px; margin-left: 17px; }
.ico-chev { width: 16px; height: 26px; }
.ico-side { width: 30px; height: 24px; }
.ico-share { width: 22px; height: 34px; }
.ico-tabs { width: 26px; height: 30px; }
.address {
  width: 1164px;
  height: 44px;
  margin-left: 505px;
  flex: none;
  display: flex;
  align-items: center;
  justify-content: space-between;
  padding: 0 14px 0 14px;
  background: linear-gradient(#fbfbfb, #f0f0f0);
  border-radius: 6px;
  box-shadow: 0 1px 1px rgba(0, 0, 0, .28);
}
.ico-reader { width: 28px; height: 20px; }
.ico-reload { width: 22px; height: 28px; }
.url {
  display: flex;
  align-items: center;
  gap: 8px;
  font-size: 24px;
  color: #333;
  font-family: Inter, "Liberation Sans", sans-serif;
}
.ico-lock { width: 16px; height: 20px; }
.newtab {
  width: 52px;
  height: 50px;
  margin-left: 16px;
  align-self: flex-end;
  background: #bdbdbd;
  display: flex;
  align-items: center;
  justify-content: center;
  flex: none;
}
.ico-plus { width: 24px; height: 24px; }

/* Page */
.page { position: relative; flex: 1; overflow: hidden; background: #fff; }
.content { padding: 24px 0 0 485px; color: #666; font-family: "Open Sans", sans-serif; }
.h1 {
  margin: 0;
  font: 400 70px/80px "Liberation Serif", serif;
  letter-spacing: 1.3px;
  color: #3c3c3c;
  white-space: nowrap;
}
.rule { width: 132px; height: 4px; margin-top: 30px; background: #3c3c3c; }
.para {
  margin: 0;
  font-size: 27px;
  line-height: 50px;
  letter-spacing: .57px;
  white-space: nowrap;
  color: #666;
}
.para-intro { margin-top: 46px; }
.para-a { margin-top: 28px; }
.para-b { margin-top: 28px; }
.h2 {
  margin: 0;
  font: 400 62px/70px "Liberation Serif", serif;
  letter-spacing: 1.6px;
  color: #3c3c3c;
}
.h2-first { margin-top: 84px; }
.h2-next { margin-top: 44px; }
.chart {
  display: block;
  width: 960px;
  height: 520px;
  margin: 44px 0 0 515px;
  font-family: "Open Sans", sans-serif;
  font-weight: 700;
}
.bars rect { fill: #5bb2e0; }
.grid path { fill: none; stroke: rgba(70, 70, 70, .18); stroke-width: 2; }
.cat text { font-size: 42px; fill: #6e6e6e; text-anchor: end; }
.pct text { font-size: 37.5px; fill: #5bb2e0; }
.axis text { font-size: 32px; fill: #767676; text-anchor: middle; }

.side-tab {
  position: absolute;
  left: 0;
  top: 80px;
  width: 8px;
  height: 80px;
  background: #2a72b8;
  border-radius: 0 5px 5px 0;
  box-shadow: 1px 3px 7px rgba(0, 0, 0, .35);
}
.share { position: absolute; right: 0; top: 598px; width: 100px; }
.share-label {
  position: absolute;
  right: 16px;
  top: 9px;
  font: 22px "Liberation Sans", sans-serif;
  color: #111;
}
.share-btn {
  height: 100px;
  display: flex;
  align-items: center;
  justify-content: center;
}
.share-label + .share-btn { margin-top: 72px; }
.fb { background: #42598f; }
.tw { background: #4aaae8; }
.em { background: #aaa; }
.ico-fb { width: 23px; height: 48px; }
.ico-tw { width: 50px; height: 40px; }
.ico-em { width: 50px; height: 31px; }
.page-fade {
  position: absolute;
  left: 0;
  right: 0;
  bottom: 0;
  height: 26px;
  background: linear-gradient(rgba(232, 232, 232, 0), rgba(232, 232, 232, .75));
}

/* Dock */
.dock {
  width: 2704px;
  height: 132px;
  margin: 6px 0 0 88px;
  padding: 10px 0 0 7px;
  display: flex;
  align-items: flex-start;
  background: #50566c;
  border-radius: 10px 10px 0 0;
}
.dk { width: 108px; flex: none; display: flex; flex-direction: column; align-items: center; }
.dk svg { width: 104px; height: 104px; display: block; overflow: visible; }
.dot { display: block; width: 5px; height: 6px; margin-top: 7px; border-radius: 50%; }
.dot.on { background: #08080c; }
.dk-sep { width: 2px; flex: none; background: #1e2440; margin-left: 24px; margin-right: 23px; }
.sep-short { height: 64px; margin-top: 24px; }
.sep-tall { height: 96px; margin-top: 8px; }
.cal-mon { font: 400 17px Inter, "Liberation Sans", sans-serif; fill: #fff; text-anchor: middle; }
.cal-day { font: 300 42px Inter, "Liberation Sans", sans-serif; fill: #222; text-anchor: middle; }
.youdao { font: 700 44px "Noto Sans CJK SC", sans-serif; fill: #fff; text-anchor: middle; }
.word { font: 700 38px "Liberation Sans", sans-serif; fill: #dfe8f6; text-anchor: middle; }
.line { font: 700 22px "Liberation Sans", sans-serif; fill: #56bc38; text-anchor: middle; }
```
